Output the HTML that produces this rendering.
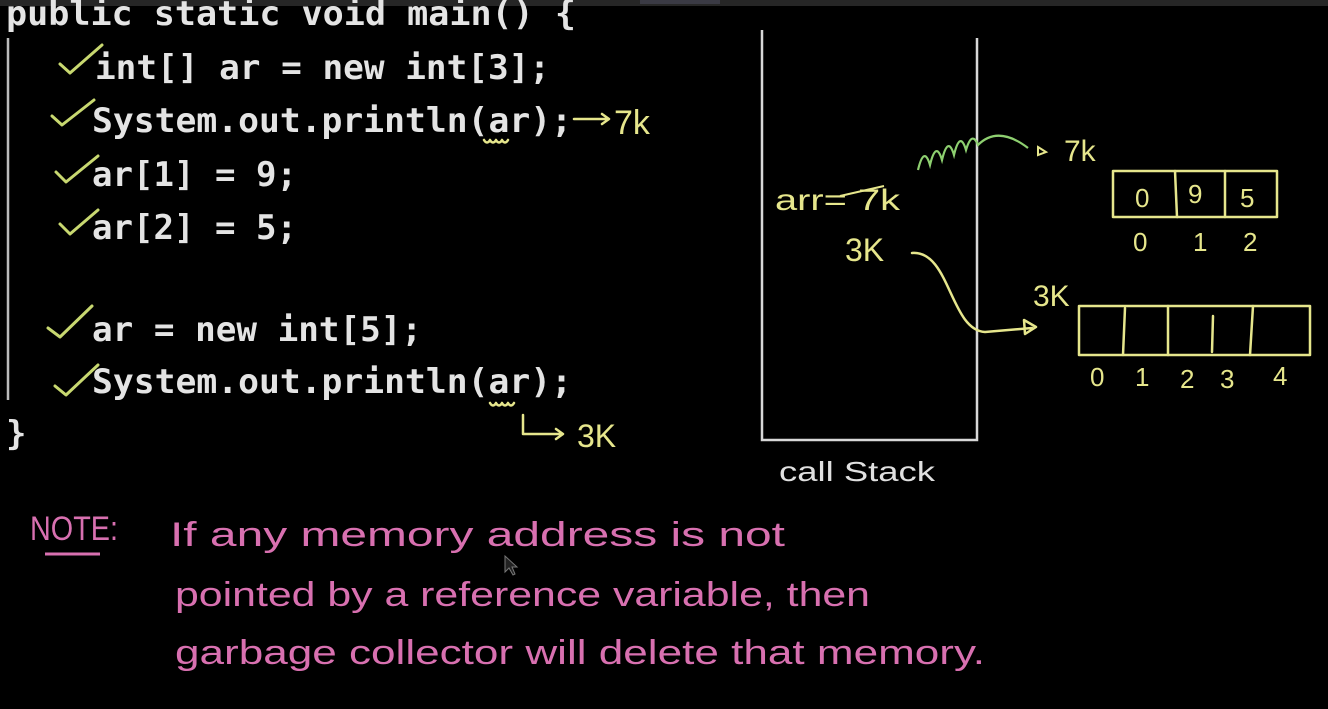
<!DOCTYPE html>
<html><head><meta charset="utf-8"><style>
html,body{margin:0;padding:0;background:#000;width:1328px;height:709px;overflow:hidden}
svg{display:block}
.code{font-family:"DejaVu Sans Mono","Liberation Mono",monospace;font-size:34px;fill:#e4e4e4;font-weight:bold}
.y{fill:none;stroke:#e6e68c;stroke-width:2.5;stroke-linecap:round;stroke-linejoin:round}
.yt{font-family:"Liberation Sans",sans-serif;fill:#e6e68c}
.p{font-family:"Liberation Sans",sans-serif;font-size:34px;fill:#d870b0}
</style></head><body>
<svg width="1328" height="709" viewBox="0 0 1328 709" xmlns="http://www.w3.org/2000/svg">
<rect width="1328" height="709" fill="#000"/>
<rect width="1328" height="6" fill="#262626"/>
<rect x="640" y="0" width="80" height="4" fill="#3a3a44"/>
<g class="code">
<text x="6" y="25" textLength="570" lengthAdjust="spacingAndGlyphs">public static void main() {</text>
<text x="95" y="79" textLength="455" lengthAdjust="spacingAndGlyphs">int[] ar = new int[3];</text>
<text x="92" y="132" textLength="480" lengthAdjust="spacingAndGlyphs">System.out.println(ar);</text>
<text x="92" y="186" textLength="205" lengthAdjust="spacingAndGlyphs">ar[1] = 9;</text>
<text x="92" y="239" textLength="205" lengthAdjust="spacingAndGlyphs">ar[2] = 5;</text>
<text x="92" y="341" textLength="330" lengthAdjust="spacingAndGlyphs">ar = new int[5];</text>
<text x="92" y="393" textLength="480" lengthAdjust="spacingAndGlyphs">System.out.println(ar);</text>
<text x="6" y="445">}</text>
</g>
<line x1="8" y1="38" x2="8" y2="400" stroke="#bbb" stroke-width="2.5"/>
<g fill="none" stroke="#c8d870" stroke-width="3" stroke-linecap="round" stroke-linejoin="round">
<path d="M60 64 L70 73 L102 45"/>
<path d="M52 116 L62 125 L94 100"/>
<path d="M56 172 L66 182 L98 156"/>
<path d="M60 224 L70 234 L98 210"/>
<path d="M48 328 L60 337 L92 306"/>
<path d="M55 386 L66 395 L98 365"/>
</g>
<path class="y" d="M484 140 q3 5 6 0 q3 5 6 0 q3 5 6 0 q3 5 6 0"/>
<path class="y" d="M490 403 q3 5 6 0 q3 5 6 0 q3 5 6 0 q3 5 6 0"/>
<path class="y" d="M574 119 L608 119 M602 114 L609 119 L602 124"/>
<text class="yt" x="614" y="134" font-size="34">7k</text>
<path class="y" d="M523 415 L523 434 L562 434 M556 429 L563 434 L556 439"/>
<text class="yt" x="577" y="447" font-size="32">3K</text>
<path d="M762 30 L762 440 L977 440 L977 38" fill="none" stroke="#d8d8d8" stroke-width="2.5"/>
<text x="779" y="481" font-family="Liberation Sans,sans-serif" font-size="28" fill="#e0e0e0" textLength="156" lengthAdjust="spacingAndGlyphs">call Stack</text>
<text class="yt" x="775" y="210" font-size="30" textLength="125" lengthAdjust="spacingAndGlyphs">arr= 7k</text>
<path d="M840 196 L884 186" stroke="#e6e68c" stroke-width="2"/>
<text class="yt" x="845" y="261" font-size="32">3K</text>
<path class="y" d="M912 253 C950 250 950 330 985 332 L1032 328 M1024 320 L1036 327 L1025 334 Z"/>
<path d="M918 170 q6 -25 12 -5 q6 -25 12 -5 q6 -25 12 -5 q6 -25 12 -5 q6 -20 12 -5 q20 -20 50 3" fill="none" stroke="#8ed070" stroke-width="2.2"/>
<path d="M1038 147 L1046 152 L1038 155 Z" fill="none" stroke="#e6e68c" stroke-width="2"/>
<text class="yt" x="1064" y="161" font-size="30">7k</text>
<rect x="1113" y="171" width="164" height="46" class="y"/>
<path class="y" d="M1175 171 L1177 217 M1225 171 L1225 217"/>
<g class="yt" font-size="26">
<text x="1135" y="207">0</text><text x="1188" y="203">9</text><text x="1240" y="207">5</text>
<text x="1133" y="251">0</text><text x="1193" y="251">1</text><text x="1243" y="251">2</text>
</g>
<text class="yt" x="1033" y="306" font-size="30">3K</text>
<rect x="1079" y="306" width="231" height="49" class="y"/>
<path class="y" d="M1125 308 L1123 355 M1168 306 L1168 355 M1213 316 L1212 352 M1253 306 L1250 355"/>
<g class="yt" font-size="26">
<text x="1090" y="386">0</text><text x="1135" y="386">1</text><text x="1180" y="388">2</text><text x="1220" y="388">3</text><text x="1273" y="385">4</text>
</g>
<text class="p" x="30" y="540" font-size="28" textLength="88" lengthAdjust="spacingAndGlyphs">NOTE:</text>
<line x1="45" y1="554" x2="100" y2="554" stroke="#d870b0" stroke-width="3"/>
<text class="p" x="170" y="546" textLength="615" lengthAdjust="spacingAndGlyphs">If  any memory address is not</text>
<text class="p" x="175" y="606" textLength="695" lengthAdjust="spacingAndGlyphs">pointed by a reference variable, then</text>
<text class="p" x="175" y="664" textLength="810" lengthAdjust="spacingAndGlyphs">garbage collector  will delete that memory.</text>
<path d="M505 556 L505 572 L509 568 L513 575 L515 574 L512 567 L517 567 Z" fill="#222" stroke="#777" stroke-width="1"/>
</svg>
</body></html>
